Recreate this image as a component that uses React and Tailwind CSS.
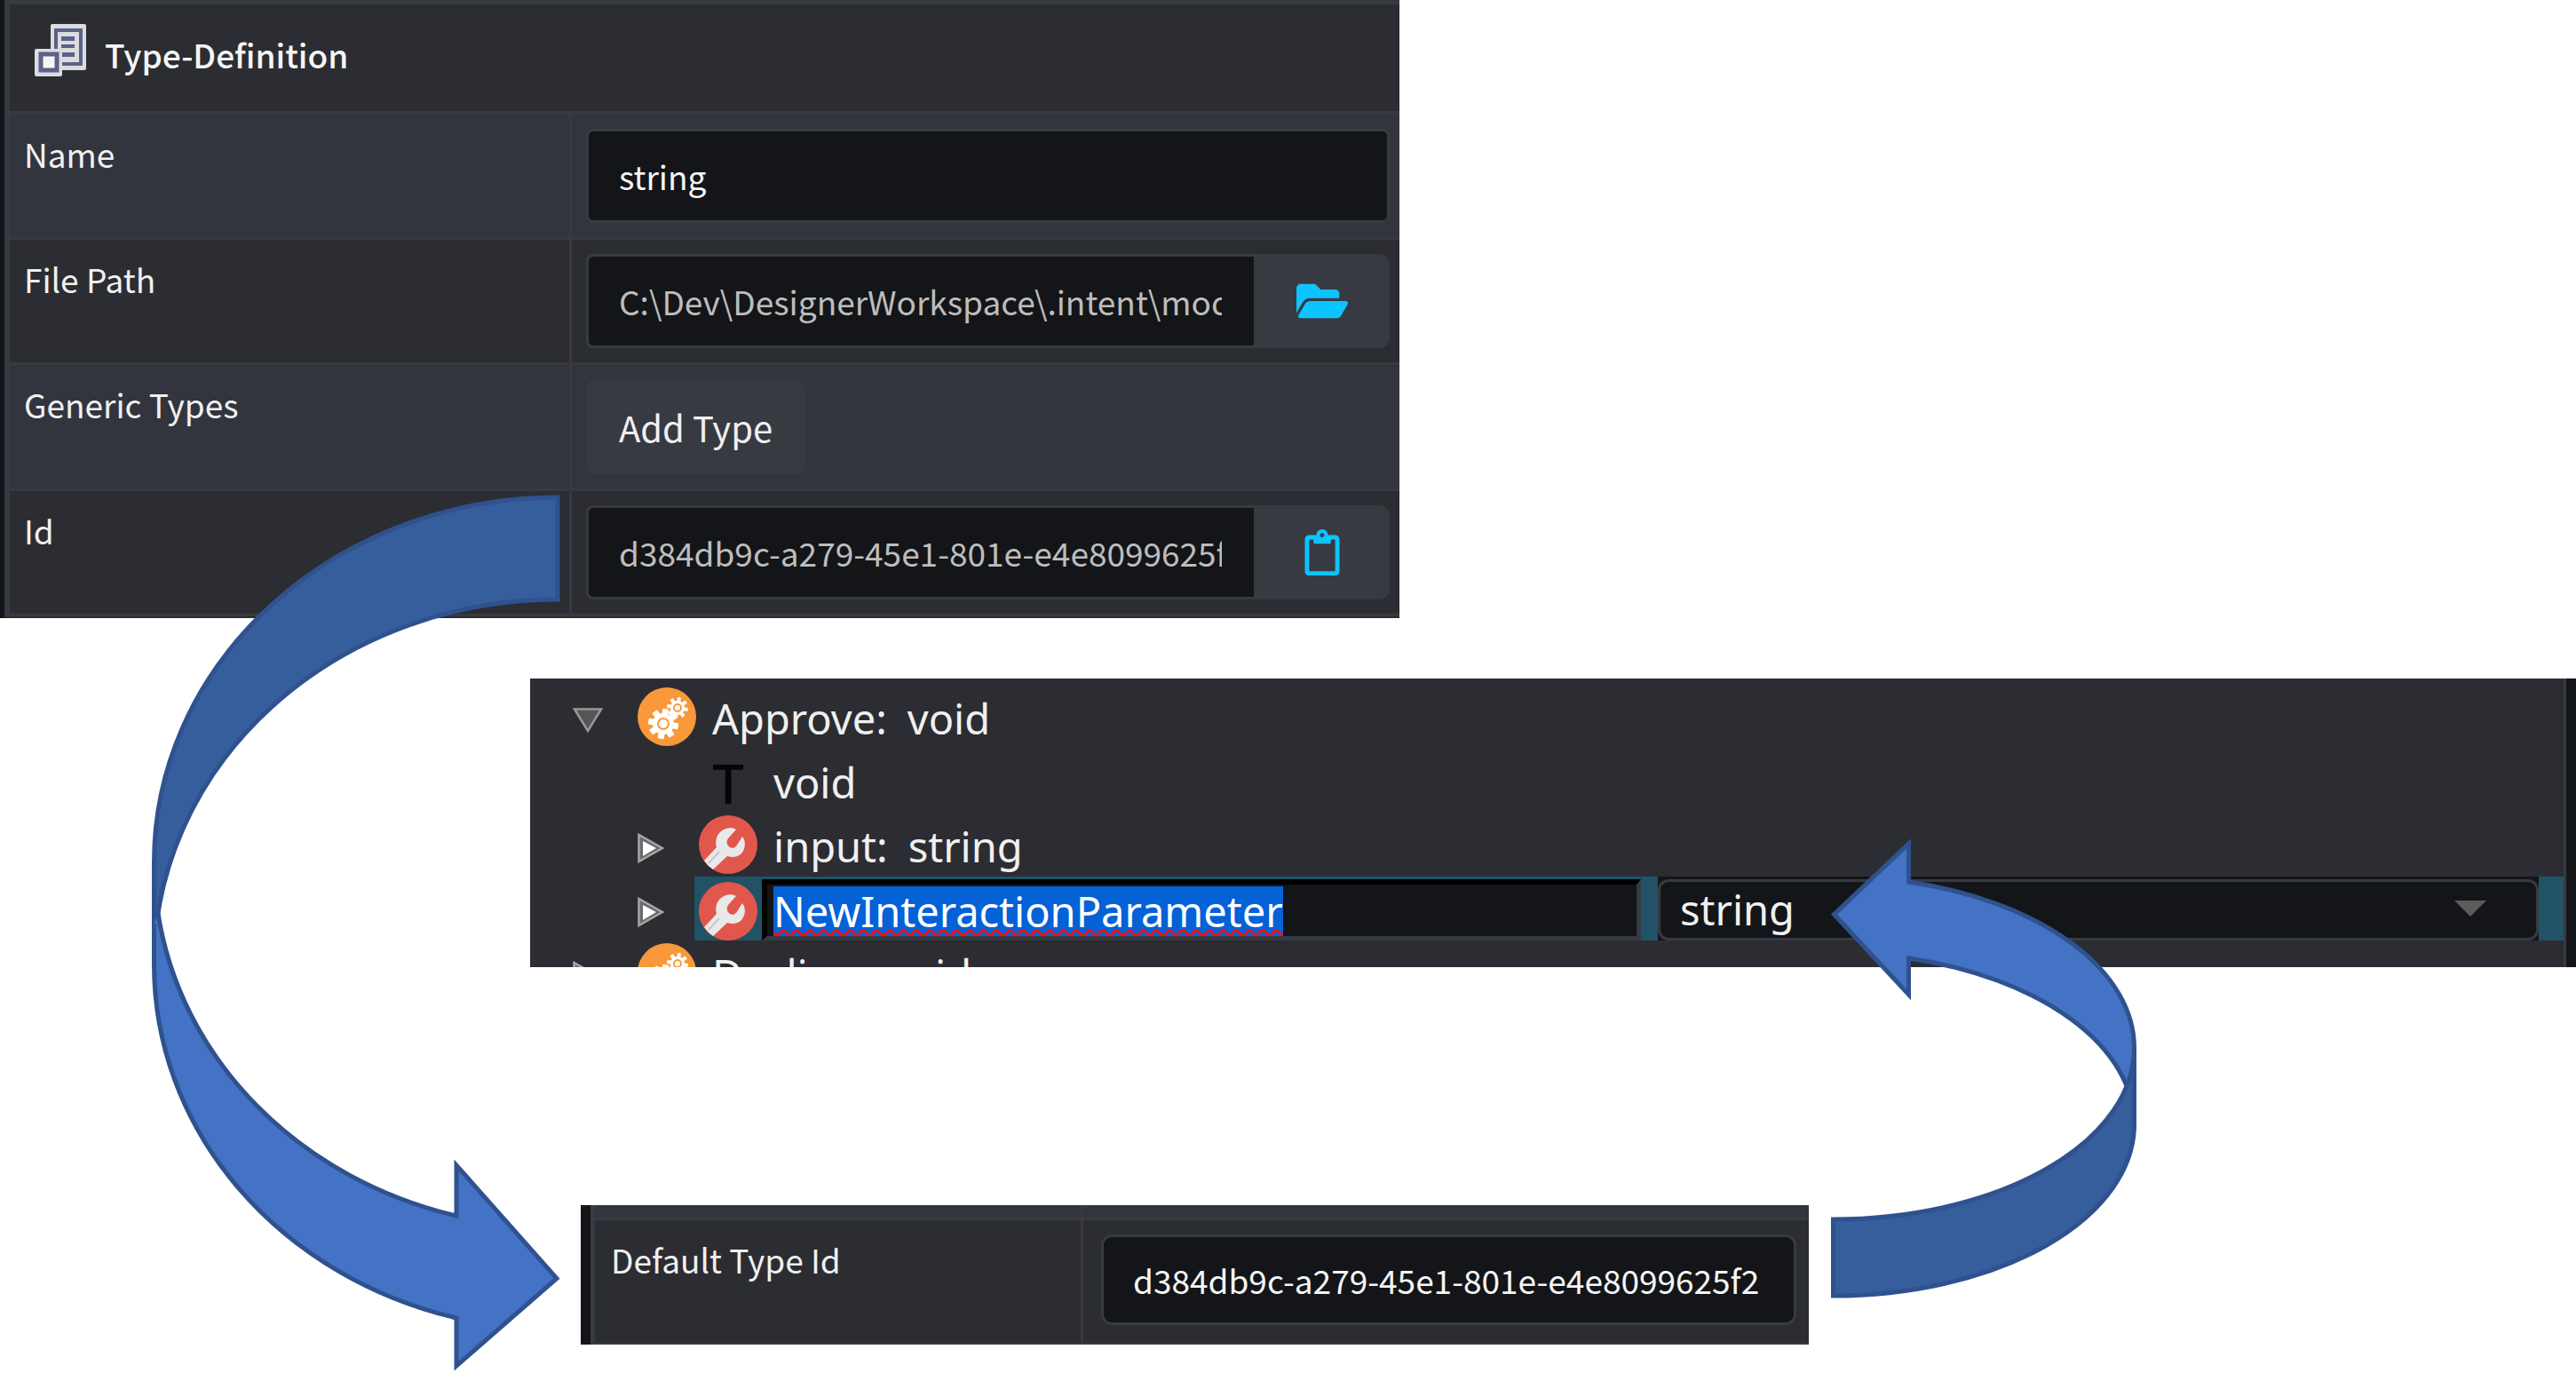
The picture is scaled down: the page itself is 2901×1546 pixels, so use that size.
import { FaFolderOpen, FaRegClipboard } from "react-icons/fa";

const FORM_FONT = "font-['Noto_Sans_CJK_SC','Open_Sans',sans-serif]";
const TREE_FONT = "font-['Noto_Sans','Open_Sans',sans-serif]";

function TypeDefinitionIcon() {
  return (
    <svg viewBox="0 0 58 59" className="h-[59px] w-[58px]" aria-hidden="true">
      <rect x="18" y="0" width="40" height="52" rx="2" fill="#dcdcdf" />
      <rect x="24" y="7" width="28" height="38" fill="none" stroke="#5b6288" strokeWidth="4" />
      <g fill="#5b6288">
        <rect x="30" y="14" width="15" height="5" />
        <rect x="30" y="23" width="15" height="4" />
        <rect x="30" y="32" width="15" height="5" />
      </g>
      <rect x="0" y="28" width="31" height="31" rx="2" fill="#dcdcdf" />
      <rect x="7" y="34" width="18" height="18" fill="#f5f5f5" stroke="#5b6288" strokeWidth="5" />
    </svg>
  );
}

function Gear({ cx, cy, body, outer, tooth, ring }) {
  const angles = [10, 55, 100, 145, 190, 235, 280, 325];
  return (
    <g>
      <circle cx={cx} cy={cy} r={body} fill="#fff" />
      {angles.map((a) => (
        <rect
          key={a}
          x={cx - tooth / 2}
          y={cy - outer}
          width={tooth}
          height={outer - body + 2}
          rx="1"
          fill="#fff"
          transform={`rotate(${a} ${cx} ${cy})`}
        />
      ))}
      <circle cx={cx} cy={cy} r={ring} fill="none" stroke="#f89a3c" strokeWidth="2" />
    </g>
  );
}

function OperationIcon() {
  return (
    <svg viewBox="0 0 66 66" className="size-[66px] shrink-0" aria-hidden="true">
      <circle cx="33" cy="33" r="33" fill="#f8983a" />
      <Gear cx={29} cy={41} body={12} outer={17} tooth={7} ring={6} />
      <Gear cx={45} cy={23} body={8} outer={12} tooth={4} ring={4} />
    </svg>
  );
}

function ParameterIcon() {
  return (
    <svg viewBox="0 0 66 66" className="size-[66px] shrink-0" aria-hidden="true">
      <circle cx="33" cy="33" r="33" fill="#e2574c" />
      <path
        d="M42 16L33 26C30 30 32 36 38 37C42 37 45 30 49 24C53 29 53 37 48 43C44 47 38 48 32 46L16 61Q10 57 6 51L20 36C18 29 20 22 25 18C30 14 37 13 42 16Z"
        fill="#e9e9e9"
      />
      <path d="M23 41L11 54" stroke="#c3c9cc" strokeWidth="2" />
    </svg>
  );
}

function ExpandedMark() {
  return (
    <svg viewBox="0 0 34 28" className="h-[28px] w-[34px]" aria-hidden="true">
      <path d="M2 1.500H32L17 26Z" fill="#555" stroke="#979797" strokeWidth="2.500" />
    </svg>
  );
}

function CollapsedMark() {
  return (
    <svg viewBox="0 0 30 34" className="h-[34px] w-[30px]" aria-hidden="true">
      <path d="M1.500 2V32L28 17Z" fill="#6a6a6a" stroke="#a5a5a5" strokeWidth="2.500" />
      <path d="M6 9V26L21 17Z" fill="#fff" />
    </svg>
  );
}

function Row({ id, label, alt, children }) {
  return (
    <div
      className={`grid grid-cols-[633fr_932fr] border-b-[3px] border-[#383a40] ${
        alt ? "bg-[#32353e]" : "bg-[#2c2d32]"
      }`}
    >
      <label
        htmlFor={id}
        className="border-r-[3px] border-[#383a40] px-4 pt-5 text-[37px] leading-[48px] text-[#f0f0f0]"
      >
        {label}
      </label>
      <div className="flex py-4 pr-[11px] pl-4">{children}</div>
    </div>
  );
}

const FIELD =
  "h-[106px] min-w-0 flex-1 border-[3px] border-[#383a42] bg-[#141518] pl-[34px] pr-[36px] text-[37px] outline-none";

function CopyField({ id, value, action, icon }) {
  return (
    <>
      <input
        id={id}
        type="text"
        readOnly
        defaultValue={value}
        className={`${FIELD} rounded-l-lg border-r-0 text-[#bdbdbd]`}
      />
      <button
        type="button"
        aria-label={action}
        className="flex w-[153px] items-center justify-center rounded-r-xl bg-[#383a42] text-[#0cc4ff]"
      >
        {icon}
      </button>
    </>
  );
}

function TypeDefinitionPanel() {
  return (
    <section className={`border-l-[5px] border-[#141518] ${FORM_FONT}`}>
      <div className="border-t-[5px] border-l-[6px] border-[#383a42]">
        <header className="flex h-[124px] items-start gap-[21px] border-b-4 border-[#383a40] bg-[#2c2d32] px-[28px] pt-[22px]">
          <TypeDefinitionIcon />
          <h1 className="pt-[10px] text-[37px] leading-[48px] font-medium text-[#f5f5f5]">Type-Definition</h1>
        </header>
        <Row id="name" label="Name" alt>
          <input
            id="name"
            type="text"
            defaultValue="string"
            className={`${FIELD} rounded-lg text-[#f5f5f5]`}
          />
        </Row>
        <Row id="file-path" label="File Path">
          <CopyField
            id="file-path"
            value="C:\Dev\DesignerWorkspace\.intent\modules"
            action="Open folder"
            icon={<FaFolderOpen className="h-auto w-[58px]" />}
          />
        </Row>
        <Row id="add-type" label="Generic Types" alt>
          <button
            id="add-type"
            type="button"
            className="h-[107px] rounded-xl bg-[#383a42] px-[37px] text-[40px] text-[#f0f0f0]"
          >
            Add Type
          </button>
        </Row>
        <Row id="type-id" label="Id">
          <CopyField
            id="type-id"
            value="d384db9c-a279-45e1-801e-e4e8099625f2"
            action="Copy id"
            icon={<FaRegClipboard className="h-[52px] w-[40px]" />}
          />
        </Row>
      </div>
      <div className="h-[2px] bg-[#2c2d32]" />
    </section>
  );
}

function TreeRow({ root, mark, icon, name, type }) {
  return (
    <li className={`flex h-[72px] items-center ${root ? "pl-[48px]" : "pl-[121px]"}`}>
      <span className={`flex shrink-0 items-center pt-2 ${root ? "w-[73px]" : "w-[69px]"}`}>{mark}</span>
      {icon}
      <span className="flex gap-[23px] pt-1 pl-[18px] text-[47px] leading-[64px]">
        {name && <span>{name}:</span>}
        <span>{type}</span>
      </span>
    </li>
  );
}

function TreePanel() {
  return (
    <section
      className={`flex h-[325px] overflow-hidden border-r-[11px] border-[#141518] bg-[#2c2d32] text-[#f0f0f0] ${TREE_FONT}`}
    >
      <ul className="min-w-0 flex-1 border-r-[3px] border-[#383a42] pt-[7px]">
        <TreeRow root mark={<ExpandedMark />} icon={<OperationIcon />} name="Approve" type="void" />
        <TreeRow
          icon={
            <span className="w-[66px] pt-2 text-center font-['Inter',sans-serif] text-[60px] leading-[64px] font-medium text-[#050505]">
              T
            </span>
          }
          type="void"
        />
        <TreeRow mark={<CollapsedMark />} icon={<ParameterIcon />} name="input" type="string" />
        <li className="flex h-[72px] items-stretch pl-[121px]">
          <span className="flex w-[64px] shrink-0 items-center pt-2">
            <CollapsedMark />
          </span>
          <div className="grid min-w-0 flex-1 grid-cols-[1085fr_992fr_28fr] bg-[#215266]">
            <div className="flex min-w-0 items-stretch gap-[5px] pt-[3px] pr-[19px] pl-[5px]">
              <span className="flex shrink-0 items-end">
                <ParameterIcon />
              </span>
              <div className="flex min-w-0 flex-1 border-t-[6px] border-r-[5px] border-b-[5px] border-l-[6px] border-t-black border-r-[#383a42] border-b-[#383a42] border-l-black bg-[#141518] pt-[2px] pl-[7px]">
                <input
                  type="text"
                  aria-label="Parameter name"
                  defaultValue="NewInteractionParameter"
                  className="[field-sizing:content] bg-[#0461d6] text-[47px] leading-[56px] text-white underline decoration-[#f0101c] decoration-wavy decoration-3 underline-offset-2 outline-none"
                />
              </div>
            </div>
            <div className="relative flex bg-[#141518] pt-[3px]">
              <select
                aria-label="Parameter type"
                className="w-full appearance-none rounded-xl border-[3px] border-[#383a42] bg-[#141518] pl-[22px] text-[47px] leading-[63px] outline-none"
              >
                <option>string</option>
              </select>
              <svg
                viewBox="0 0 36 18"
                className="pointer-events-none absolute top-[27px] right-[59px] h-[18px] w-[36px]"
                aria-hidden="true"
              >
                <path d="M0 0H36L18 18Z" fill="#5c5c5c" />
              </svg>
            </div>
          </div>
        </li>
        <TreeRow root mark={<CollapsedMark />} icon={<OperationIcon />} name="Decline" type="void" />
      </ul>
    </section>
  );
}

function DefaultTypePanel() {
  return (
    <section className={`border-l-[11px] border-[#141518] ${FORM_FONT}`}>
      <div className="border-l-[5px] border-[#383a42]">
        <div className="grid h-[17px] grid-cols-[550fr_817fr] border-b-[3px] border-[#383a40] bg-[#32353e]">
          <div className="border-r-[3px] border-[#383a40]" />
        </div>
        <div className="grid grid-cols-[550fr_817fr] border-b-[2px] border-[#383a40] bg-[#2c2d32]">
          <label
            htmlFor="default-type-id"
            className="border-r-[3px] border-[#383a40] px-[18px] pt-5 text-[37px] leading-[48px] text-[#f0f0f0]"
          >
            Default Type Id
          </label>
          <div className="flex pt-4 pr-[14px] pb-5 pl-[20px]">
            <input
              id="default-type-id"
              type="text"
              defaultValue="d384db9c-a279-45e1-801e-e4e8099625f2"
              className="h-[102px] min-w-0 flex-1 rounded-xl border-[3px] border-[#383a42] bg-[#141518] px-[33px] text-[37px] text-[#f5f5f5] outline-none"
            />
          </div>
        </div>
      </div>
    </section>
  );
}

function FlowArrows() {
  return (
    <svg
      viewBox="0 0 2901 1546"
      className="pointer-events-none absolute top-0 left-0 w-full"
      aria-hidden="true"
    >
      <g stroke="#2f528f" strokeWidth="5" strokeMiterlimit="10">
        <path
          d="M628 560A454.500 411 0 0 0 173.500 971V1086A454.500 411 0 0 1 628 675Z"
          fill="#365d9c"
        />
        <path
          d="M178 1028.500A454.500 411 0 0 0 514 1369V1312L627 1439.500L514 1538V1484A454.500 411 0 0 1 173.500 1086V1040"
          fill="#4472c4"
        />
        <path
          d="M2065.500 1029.500L2149.500 950V993A339 193 0 0 1 2403.500 1180V1266A339 193 0 0 0 2149.500 1079V1120Z"
          fill="#4472c4"
        />
        <path
          d="M2064.500 1373A339 193 0 0 0 2403.500 1180V1266A339 193 0 0 1 2064.500 1459Z"
          fill="#365d9c"
        />
      </g>
    </svg>
  );
}

export default function App() {
  return (
    <main className="relative flex min-h-screen flex-col overflow-hidden bg-white">
      <div className="grid grid-cols-[1576fr_1325fr]">
        <TypeDefinitionPanel />
      </div>
      <div className="grid grid-cols-[597fr_2304fr] pt-[68px]">
        <div />
        <TreePanel />
      </div>
      <div className="grid grid-cols-[654fr_1383fr_864fr] pt-[268px]">
        <div />
        <DefaultTypePanel />
      </div>
      <FlowArrows />
    </main>
  );
}
